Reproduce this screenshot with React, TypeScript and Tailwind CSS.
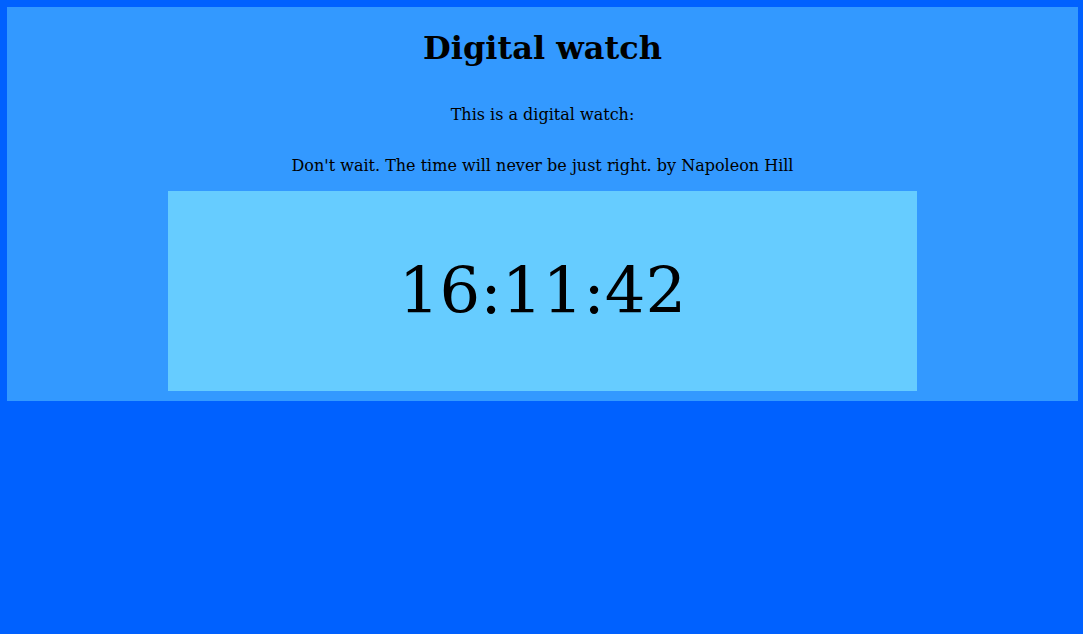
export default function App() {
  return (
    <div
      className="min-h-screen w-full bg-[#0061ff] pt-[7px] pl-[7px] pr-[5px]"
      style={{ fontFamily: '"DejaVu Serif", serif' }}
    >
      <div className="flow-root bg-[#3399ff] text-black pb-[10px]">
        <h1 className="mt-[22px] text-center text-[32px] font-bold leading-[normal]">
          Digital watch
        </h1>
        <p className="mt-[38px] text-center text-[16px] leading-[normal]">
          This is a digital watch:
        </p>
        <p className="mt-[32px] text-center text-[16px] leading-[normal]">
          Don't wait. The time will never be just right. by Napoleon Hill
        </p>
        <div className="mx-auto mt-[16px] flex h-[200px] w-[749px] items-center justify-center bg-[#66ccff]">
          <span className="text-[64px] leading-[normal]">16:11:42</span>
        </div>
      </div>
    </div>
  );
}
